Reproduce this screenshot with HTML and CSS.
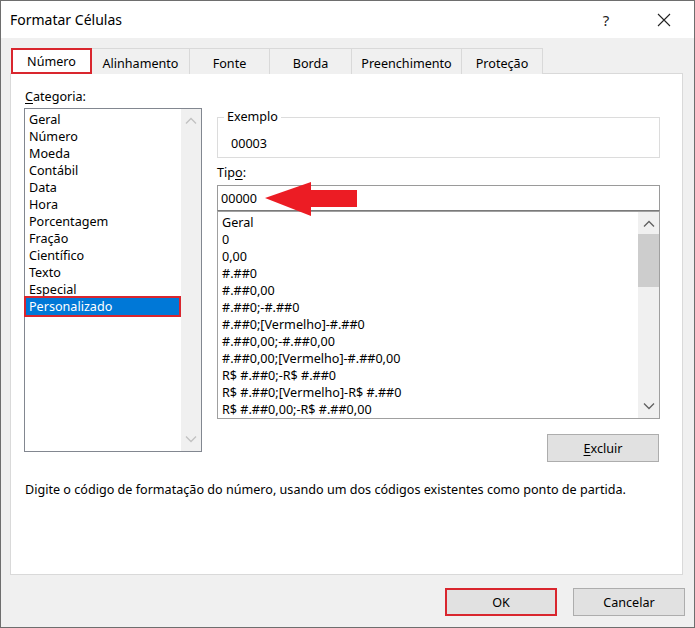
FILE: index.html
```html
<!DOCTYPE html>
<html lang="pt-BR">

<head>
    <meta charset="UTF-8">
    <link rel="stylesheet" href="styles.css">
    <title>Formatar Células</title>
</head>

<body>
    <div class="window">
        <div class="titlebar">
            <span class="title">Formatar Células</span>
            <span class="help">?</span>
            <span class="close">
                <svg width="14" height="14" viewBox="0 0 14 14">
                    <path d="M1 1 L13 13 M13 1 L1 13" stroke="#222" stroke-width="1.1" fill="none" />
                </svg>
            </span>
        </div>

        <div class="dialog">
            <div class="tabs">
                <div class="tab tab-active">Número</div>
                <div class="tab tab-w98">Alinhamento</div>
                <div class="tab tab-w80">Fonte</div>
                <div class="tab tab-w82">Borda</div>
                <div class="tab tab-w110">Preenchimento</div>
                <div class="tab tab-w81">Proteção</div>
            </div>

            <div class="panel">
                <div class="columns">
                    <div class="cat-col">
                        <div class="label"><u>C</u>ategoria:</div>
                        <div class="listbox cat-list">
                            <ul class="items">
                                <li>Geral</li>
                                <li>Número</li>
                                <li>Moeda</li>
                                <li>Contábil</li>
                                <li>Data</li>
                                <li>Hora</li>
                                <li>Porcentagem</li>
                                <li>Fração</li>
                                <li>Científico</li>
                                <li>Texto</li>
                                <li>Especial</li>
                                <li class="selected">Personalizado</li>
                            </ul>
                            <div class="scrollbar">
                                <svg class="chev" width="12" height="8" viewBox="0 0 12 8">
                                    <path d="M1 6.5 L6 1.5 L11 6.5" stroke="#c2c2c2" stroke-width="1.3" fill="none" />
                                </svg>
                                <div class="track"></div>
                                <svg class="chev" width="12" height="8" viewBox="0 0 12 8">
                                    <path d="M1 1.5 L6 6.5 L11 1.5" stroke="#c2c2c2" stroke-width="1.3" fill="none" />
                                </svg>
                            </div>
                        </div>
                    </div>

                    <div class="main-col">
                        <div class="example">
                            <span class="legend">Exemplo</span>
                            <div class="example-value">00003</div>
                        </div>

                        <div class="label label-tipo">Tip<u>o</u>:</div>
                        <div class="type-wrap">
                            <div class="type-input">00000</div>
                            <svg class="arrow" width="96" height="36" viewBox="0 0 96 36">
                                <polygon points="0,16 46,0 46,8 92,8 92,25 46,25 46,34" fill="#ec1c24" />
                            </svg>
                        </div>

                        <div class="listbox fmt-list">
                            <ul class="items">
                                <li>Geral</li>
                                <li>0</li>
                                <li>0,00</li>
                                <li>#.##0</li>
                                <li>#.##0,00</li>
                                <li>#.##0;-#.##0</li>
                                <li>#.##0;[Vermelho]-#.##0</li>
                                <li>#.##0,00;-#.##0,00</li>
                                <li>#.##0,00;[Vermelho]-#.##0,00</li>
                                <li>R$ #.##0;-R$ #.##0</li>
                                <li>R$ #.##0;[Vermelho]-R$ #.##0</li>
                                <li>R$ #.##0,00;-R$ #.##0,00</li>
                            </ul>
                            <div class="scrollbar">
                                <svg class="chev" width="12" height="8" viewBox="0 0 12 8">
                                    <path d="M1 6.5 L6 1.5 L11 6.5" stroke="#606060" stroke-width="1.3" fill="none" />
                                </svg>
                                <div class="track">
                                    <div class="thumb"></div>
                                </div>
                                <svg class="chev" width="12" height="8" viewBox="0 0 12 8">
                                    <path d="M1 1.5 L6 6.5 L11 1.5" stroke="#606060" stroke-width="1.3" fill="none" />
                                </svg>
                            </div>
                        </div>

                        <div class="excluir-row">
                            <button class="btn"><u>E</u>xcluir</button>
                        </div>
                    </div>
                </div>

                <p class="hint">Digite o código de formatação do número, usando um dos códigos existentes como ponto de partida.</p>
            </div>

            <div class="footer">
                <button class="btn btn-ok">OK</button>
                <button class="btn">Cancelar</button>
            </div>
        </div>
    </div>
</body>

</html>
```

FILE: styles.css
```css
body {
    margin: 0;
    padding: 0;
    font-family: "Noto Sans", "Open Sans", sans-serif;
    font-size: 12.6px;
    color: #000;
    background-color: #ffffff;
}

u {
    text-decoration-thickness: 1px;
    text-underline-offset: 2px;
}

.window {
    width: 695px;
    height: 628px;
    box-sizing: border-box;
    border: 1px solid #6e6e6e;
    background-color: #f0f0f0;
    display: flex;
    flex-direction: column;
}

.titlebar {
    height: 37px;
    background-color: #ffffff;
    display: flex;
    align-items: center;
    padding-left: 9px;
}

.title {
    font-size: 14px;
    color: #000;
    flex: 1;
}

.help {
    font-size: 15px;
    color: #222;
    width: 20px;
    text-align: center;
    margin-right: 41px;
}

.close {
    display: flex;
    margin-right: 23px;
}

.dialog {
    flex: 1;
    padding: 10px 0 0 9px;
}

/* tabs */
.tabs {
    display: flex;
    padding-left: 1px;
    position: relative;
    z-index: 1;
}

.tab {
    height: 26px;
    box-sizing: border-box;
    border: 1px solid #d9d9d9;
    border-left: none;
    border-bottom: none;
    background-color: #f0f0f0;
    text-align: center;
    line-height: 29px;
    margin-bottom: -1px;
}

.tab-active {
    width: 81px;
    background-color: #ffffff;
    border: 2px solid #d9262e;
    line-height: 24px;
    height: 26px;
    margin-bottom: -1px;
}

.tab-w98 { width: 98px; }
.tab-w80 { width: 80px; }
.tab-w82 { width: 82px; }
.tab-w110 { width: 110px; }
.tab-w81 { width: 81px; }

.panel {
    width: 673px;
    height: 502px;
    box-sizing: border-box;
    background-color: #ffffff;
    border: 1px solid #d9d9d9;
    padding: 15px 0 0 13px;
}

.columns {
    display: flex;
    gap: 15px;
}

.label {
    line-height: 16px;
    height: 16px;
    margin-left: 1px;
}

/* list boxes */
.listbox {
    display: flex;
    box-sizing: border-box;
    border: 1px solid #828790;
    background-color: #ffffff;
}

.items {
    list-style: none;
    margin: 0;
    padding: 2px 0 0 0;
    flex: 1;
}

.items li {
    height: 17px;
    line-height: 18px;
    padding-left: 4px;
    white-space: nowrap;
}

.cat-list {
    width: 178px;
    height: 344px;
    margin-top: 3px;
}

.cat-list .selected {
    position: relative;
    background-color: #0078d7;
    color: #ffffff;
}

.cat-list .selected::after {
    content: "";
    position: absolute;
    left: -1px;
    right: 0;
    top: -2px;
    bottom: -2px;
    border: 2px solid #d9262e;
}

.scrollbar {
    width: 20px;
    background-color: #f0f0f0;
    display: flex;
    flex-direction: column;
    align-items: center;
}

.chev {
    margin: 8px 0;
}

.track {
    flex: 1;
    align-self: stretch;
}

.thumb {
    height: 53px;
    background-color: #cdcdcd;
    margin-top: -2px;
}

.main-col {
    width: 443px;
}

.example {
    position: relative;
    height: 41px;
    box-sizing: border-box;
    border: 1px solid #dcdcdc;
    margin-top: 28px;
    padding: 18px 0 0 13px;
}

.legend {
    position: absolute;
    top: -9px;
    left: 6px;
    padding: 0 3px;
    background-color: #ffffff;
    line-height: 16px;
}

.example-value {
    line-height: 16px;
}

.label-tipo {
    margin-top: 7px;
    margin-left: 0;
}

.type-wrap {
    position: relative;
    margin-top: 4px;
}

.type-input {
    height: 26px;
    box-sizing: border-box;
    border: 1px solid #9a9a9a;
    border-bottom-color: #7a7a7a;
    padding-left: 3px;
    line-height: 25px;
}

.arrow {
    position: absolute;
    left: 48px;
    top: -3px;
}

.fmt-list {
    height: 208px;
    border-color: #a0a0a0;
    overflow: hidden;
}

.fmt-list .scrollbar {
    width: 21px;
}

.excluir-row {
    display: flex;
    justify-content: flex-end;
    margin-top: 15px;
}

.btn {
    width: 112px;
    height: 28px;
    background-color: #e1e1e1;
    border: 1px solid #adadad;
    font-family: "Noto Sans", "Open Sans", sans-serif;
    font-size: 12.6px;
    color: #000;
    padding: 0;
}

.excluir-row .btn {
    margin-right: 1px;
}

.hint {
    margin: 20px 0 0 1px;
    line-height: 16px;
}

.footer {
    display: flex;
    justify-content: flex-end;
    gap: 16px;
    margin-top: 13px;
    padding-right: 9px;
}

.btn-ok {
    border: 2px solid #d9262e;
}
```
